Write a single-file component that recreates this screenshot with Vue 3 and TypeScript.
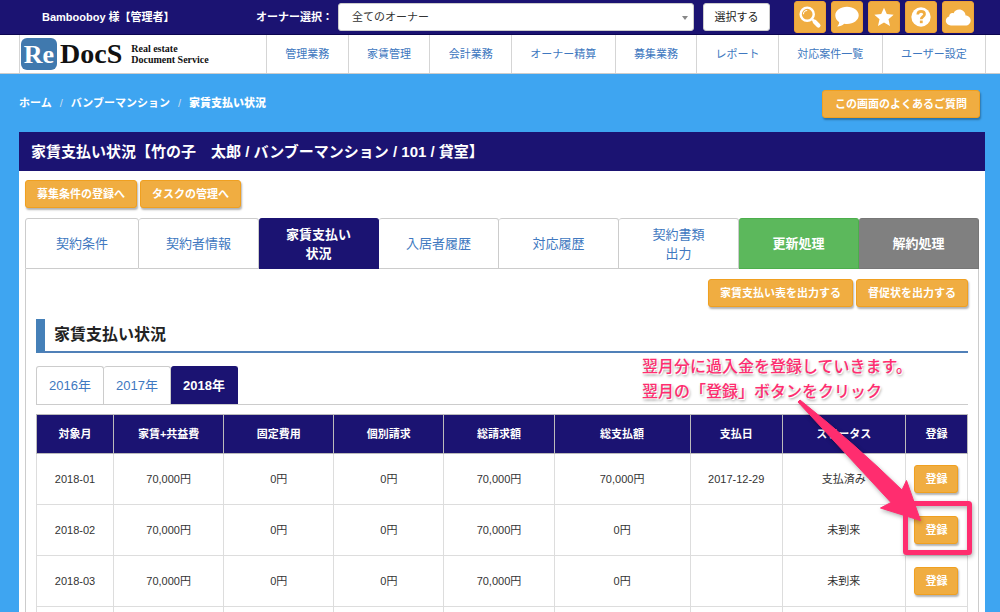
<script setup lang="ts">
interface Row {
  month: string
  rent: string
  fixed: string
  extra: string
  billed: string
  paid: string
  date: string
  status: string
}

interface Tab {
  lines: string[]
  kind: string
}

const owners: string[] = ['全てのオーナー']
const menu: string[] = ['管理業務', '家賃管理', '会計業務', 'オーナー精算', '募集業務', 'レポート', '対応案件一覧', 'ユーザー設定']
const tabs: Tab[] = [
  { lines: ['契約条件'], kind: '' },
  { lines: ['契約者情報'], kind: '' },
  { lines: ['家賃支払い', '状況'], kind: 'active' },
  { lines: ['入居者履歴'], kind: '' },
  { lines: ['対応履歴'], kind: '' },
  { lines: ['契約書類', '出力'], kind: '' },
  { lines: ['更新処理'], kind: 'green' },
  { lines: ['解約処理'], kind: 'gray' },
]
const years: string[] = ['2016年', '2017年', '2018年']
const headers: string[] = ['対象月', '家賃+共益費', '固定費用', '個別請求', '総請求額', '総支払額', '支払日', 'ステータス', '登録']

const makeRow = (month: string, paid: string, date: string, status: string): Row => ({
  month, rent: '70,000円', fixed: '0円', extra: '0円', billed: '70,000円', paid, date, status,
})
const rows: Row[] = [
  makeRow('2018-01', '70,000円', '2017-12-29', '支払済み'),
  makeRow('2018-02', '0円', '', '未到来'),
  makeRow('2018-03', '0円', '', '未到来'),
]
</script>

<template>
  <div class="page">
    <header class="topbar">
      <strong class="user">Bambooboy 様【管理者】</strong>
      <label class="owner-label" for="owner">オーナー選択：</label>
      <div class="select-wrap">
        <select id="owner">
          <option v-for="o in owners" :key="o">{{ o }}</option>
        </select>
      </div>
      <button class="choose" type="button">選択する</button>
      <div class="icons">
        <button type="button" aria-label="検索">
          <svg viewBox="0 0 32 32"><circle cx="13" cy="13" r="7" fill="none" stroke="#fff" stroke-width="2.600" /><path d="M9 13a4 4 0 0 1 4-4" fill="none" stroke="#fff" stroke-width="1.200" /><path d="M18.500 18.500l1.500 1.500" stroke="#fff" stroke-width="2.500" /><path d="M21 21l4 4" stroke="#fff" stroke-width="4.500" stroke-linecap="round" /></svg>
        </button>
        <button type="button" aria-label="メッセージ">
          <svg viewBox="0 0 32 32"><path d="M16 5c7 0 12.500 4 12.500 9.200s-5.500 9.200-12.500 9.200c-1 0-2-.1-3-.3-2 1.800-4.500 2.900-7.500 3 1.300-1.300 2-2.800 2.200-4.600C5 19.900 3.500 17.200 3.500 14.200 3.500 9 9 5 16 5z" fill="#fff" /></svg>
        </button>
        <button type="button" aria-label="お気に入り">
          <svg viewBox="0 0 32 32"><path d="M16 6l3 6.800 7.300.7-5.500 4.900 1.600 7.300L16 21.900l-6.400 3.800 1.600-7.300-5.500-4.900 7.300-.7z" fill="#fff" /></svg>
        </button>
        <button type="button" aria-label="ヘルプ">
          <svg viewBox="0 0 32 32"><circle cx="16" cy="16" r="10.300" fill="#fff" /><path d="M12.500 13.300c.1-2.200 1.500-3.300 3.600-3.300s3.700 1.200 3.700 3.100c0 2.500-3.600 2.500-3.600 5.400" fill="none" stroke="#f0ad41" stroke-width="2.800" /><rect x="14.800" y="19.800" width="3" height="2.800" fill="#f0ad41" /></svg>
        </button>
        <button type="button" aria-label="クラウド">
          <svg viewBox="0 0 32 32"><path d="M8.500 25C5.400 25 3 22.900 3 20.100c0-2.300 1.500-4 3.600-4.600-.2-2.700 2.300-4.500 4.700-3.600C12.400 9.400 14.600 8 17.200 8c3.700 0 6.600 2.700 6.900 6.300 3.200 0 5.400 2.500 5.400 5.300 0 3-2.300 5.400-5.400 5.400z" fill="#fff" /></svg>
        </button>
      </div>
    </header>

    <nav class="menu">
      <a class="logo" href="#">
        <span class="logo-re">Re</span><span class="logo-name">DocS</span>
        <span class="logo-sub">Real estate<br>Document Service</span>
      </a>
      <a v-for="m in menu" :key="m" class="menu-item" href="#">{{ m }}</a>
    </nav>

    <div class="crumb-row">
      <div class="crumbs">
        <a href="#">ホーム</a><i>/</i><a href="#">バンブーマンション</a><i>/</i><b>家賃支払い状況</b>
      </div>
      <button class="btn faq" type="button">この画面のよくあるご質問</button>
    </div>

    <main class="panel">
      <h1>家賃支払い状況【竹の子　太郎 / バンブーマンション / 101 / 貸室】</h1>
      <div class="panel-body">
        <div class="actions">
          <button class="btn" type="button">募集条件の登録へ</button>
          <button class="btn" type="button">タスクの管理へ</button>
        </div>
        <div class="tabs">
          <a v-for="t in tabs" :key="t.lines[0]" href="#" class="tab" :class="t.kind">
            <span v-for="l in t.lines" :key="l">{{ l }}</span>
          </a>
        </div>
        <section class="tab-body">
          <div class="actions right">
            <button class="btn" type="button">家賃支払い表を出力する</button>
            <button class="btn" type="button">督促状を出力する</button>
          </div>
          <h2>家賃支払い状況</h2>
          <div class="years">
            <a v-for="(y, i) in years" :key="y" href="#" class="year" :class="{ active: i === 2 }">{{ y }}</a>
          </div>
          <table>
            <colgroup>
              <col class="w-month"><col class="w-money"><col class="w-money"><col class="w-money"><col class="w-money">
              <col class="w-paid"><col class="w-date"><col class="w-status"><col class="w-reg">
            </colgroup>
            <thead>
              <tr><th v-for="h in headers" :key="h" scope="col">{{ h }}</th></tr>
            </thead>
            <tbody>
              <tr v-for="(r, i) in rows" :key="r.month">
                <td>{{ r.month }}</td>
                <td>{{ r.rent }}</td>
                <td>{{ r.fixed }}</td>
                <td>{{ r.extra }}</td>
                <td>{{ r.billed }}</td>
                <td>{{ r.paid }}</td>
                <td>{{ r.date }}</td>
                <td>{{ r.status }}</td>
                <td class="reg">
                  <button class="btn small" type="button">登録</button>
                  <template v-if="i === 1">
                    <p class="note">翌月分に過入金を登録していきます。<br>翌月の「登録」ボタンをクリック</p>
                    <svg class="pointer" viewBox="780 390 200 170" aria-hidden="true">
                      <rect x="906.500" y="502.500" width="64" height="49" rx="1" fill="none" stroke="#ff2d6f" stroke-width="5" />
                      <path d="M801 399Q856 443 903 489L907.500 479.500L921.500 519.500L881.500 507L892 501.500Q848 454 799 401Z" fill="#ff2d6f" stroke="#ff2d6f" stroke-width="1" stroke-linejoin="round" />
                    </svg>
                  </template>
                </td>
              </tr>
              <tr aria-hidden="true"><td v-for="h in headers" :key="h"></td></tr>
            </tbody>
          </table>
        </section>
      </div>
    </main>
  </div>
</template>

<style>
html,
body {
  margin: 0;
  background: #3ea5f1;
}
</style>

<style scoped>
.page {
  height: 100vh;
  overflow: hidden;
  font-family: "Liberation Sans", "Noto Sans CJK JP", sans-serif;
  font-size: 11px;
  line-height: 16px;
  color: #333;
}
.page * {
  box-sizing: border-box;
}
a {
  color: #4078c0;
  text-decoration: none;
}
button,
select {
  font: inherit;
}
.topbar {
  display: flex;
  align-items: center;
  height: 35px;
  padding: 0 26px 0 42px;
  background: #1b1372;
  border-bottom: 1px solid #0c0650;
  color: #fff;
}
.user {
  width: 214px;
}
.owner-label {
  width: 82px;
  font-weight: 700;
  white-space: nowrap;
}
.select-wrap {
  position: relative;
  flex: 1;
}
.select-wrap::after {
  content: "";
  position: absolute;
  right: 6px;
  top: 13px;
  border: 3px solid transparent;
  border-top: 4px solid #888;
  pointer-events: none;
}
select {
  display: block;
  width: 100%;
  height: 28px;
  padding: 0 13px;
  appearance: none;
  border: 1px solid #ccc;
  border-radius: 3px;
  background: #fff;
  color: #333;
}
.choose {
  width: 67px;
  height: 28px;
  margin: 0 24px 0 9px;
  padding: 0;
  border: 1px solid #ccc;
  border-radius: 3px;
  background: #fff;
  color: #222;
}
.icons {
  display: flex;
  gap: 5px;
}
.icons button {
  width: 32px;
  height: 32px;
  padding: 0;
  border: 1px solid #eea236;
  border-radius: 3px;
  background: #f0ad41;
}
.icons svg {
  display: block;
  width: 30px;
  height: 30px;
}
.menu {
  display: flex;
  height: 39px;
  padding: 0 14px 0 19px;
  background: #fff;
  border-bottom: 1px solid #ccc;
}
.menu-item {
  flex: 1 0 auto;
  padding: 0 17px;
  border-right: 1px solid #d5d5d5;
  line-height: 39px;
  text-align: center;
}
.logo {
  display: flex;
  align-items: center;
  width: 248px;
  padding-left: 1px;
  border: solid #d5d5d5;
  border-width: 0 1px;
  color: #111;
  font-family: "Liberation Serif", serif;
  font-weight: 700;
}
.logo-re {
  width: 36px;
  height: 32px;
  border-radius: 6px;
  background: #4079ae;
  color: #fff;
  font-size: 26px;
  line-height: 34px;
  text-align: center;
}
.logo-name {
  margin-left: 3px;
  font-size: 28px;
  line-height: 32px;
}
.logo-sub {
  margin-left: 9px;
  font-size: 10px;
  line-height: 11px;
}
.crumb-row {
  display: flex;
  align-items: flex-start;
  justify-content: space-between;
  height: 58px;
  padding: 16px 20px 0 19px;
}
.crumbs {
  padding-top: 5px;
  color: #fff;
  font-weight: 700;
}
.crumbs a {
  color: #fff;
}
.crumbs i {
  padding: 0 8px;
  color: #cde;
  font-style: normal;
  font-weight: 400;
}
.btn {
  height: 28px;
  padding: 0 11px;
  border: 1px solid #f0a020;
  border-radius: 3px;
  background: #f0ad41;
  box-shadow: 1px 2px 2px rgba(0, 0, 0, 0.3);
  color: #fff;
  font-weight: 700;
  line-height: 16px;
  white-space: nowrap;
}
.faq {
  padding: 0 12px;
}
.panel {
  margin: 0 15px 0 19px;
  background: #fff;
}
h1 {
  height: 39px;
  margin: 0;
  padding: 0 12px;
  background: #1b1372;
  color: #fff;
  font-size: 15px;
  line-height: 39px;
  white-space: nowrap;
}
.panel-body {
  padding: 9px 6px 0;
}
.actions {
  display: flex;
  gap: 3px;
}
.tabs {
  display: grid;
  grid-template-columns: 114fr repeat(7, 120fr);
  margin-top: 10px;
}
.tab {
  display: flex;
  flex-direction: column;
  justify-content: center;
  height: 51px;
  border: 1px solid #ccc;
  border-left-width: 0;
  border-radius: 3px 3px 0 0;
  font-size: 13px;
  line-height: 19px;
  text-align: center;
}
.tab:first-child {
  border-left-width: 1px;
}
.tab.active,
.tab.green,
.tab.gray {
  border-color: #1b1372;
  background: #1b1372;
  color: #fff;
  font-weight: 700;
}
.tab.green {
  border-color: #4cae4c;
  background: #5cb85c;
}
.tab.gray {
  border-color: #777;
  background: #808080;
}
.tab-body {
  padding: 10px 10px 0;
  border: solid #ccc;
  border-width: 0 1px;
}
.right {
  justify-content: flex-end;
}
h2 {
  height: 34px;
  margin: 12px 0 0;
  padding-left: 9px;
  border-left: 9px solid #4580b8;
  border-bottom: 2px solid #5080b8;
  color: #222;
  font-size: 16px;
  line-height: 32px;
}
.years {
  display: flex;
  margin-top: 13px;
  border-bottom: 1px solid #ccc;
}
.year {
  width: 67px;
  height: 38px;
  border: solid #ccc;
  border-width: 1px 1px 0 0;
  border-radius: 3px 3px 0 0;
  font-size: 13px;
  line-height: 37px;
  text-align: center;
}
.year:first-child {
  width: 68px;
  border-left-width: 1px;
}
.year.active {
  border-color: #1b1372;
  background: #1b1372;
  color: #fff;
  font-weight: 700;
}
table {
  width: 100%;
  margin-top: 9px;
  border-collapse: collapse;
  table-layout: fixed;
  text-align: center;
}
.w-month {
  width: 77px;
}
.w-money {
  width: 110px;
}
.w-paid {
  width: 136px;
}
.w-date {
  width: 92px;
}
.w-status {
  width: 123px;
}
.w-reg {
  width: 62px;
}
th {
  height: 39px;
  padding: 0;
  border: 1px solid #bbb;
  background: #1b1372;
  color: #fff;
}
td {
  height: 51px;
  padding: 0;
  border: 1px solid #ddd;
}
.reg {
  position: relative;
}
.small {
  width: 44px;
  padding: 0;
}
.note {
  position: absolute;
  right: 55px;
  bottom: 151px;
  margin: 0;
  color: #ff2d6f;
  font-size: 16px;
  font-weight: 500;
  line-height: 25px;
  text-align: left;
  text-shadow: 1px 1px 0 #fff, 1px 2px 3px rgba(0, 0, 0, 0.45);
  white-space: nowrap;
}
.pointer {
  position: absolute;
  right: -12px;
  bottom: -6px;
  width: 200px;
  height: 170px;
  filter: drop-shadow(1px 2px 2px rgba(0, 0, 0, 0.3));
  pointer-events: none;
}
</style>
